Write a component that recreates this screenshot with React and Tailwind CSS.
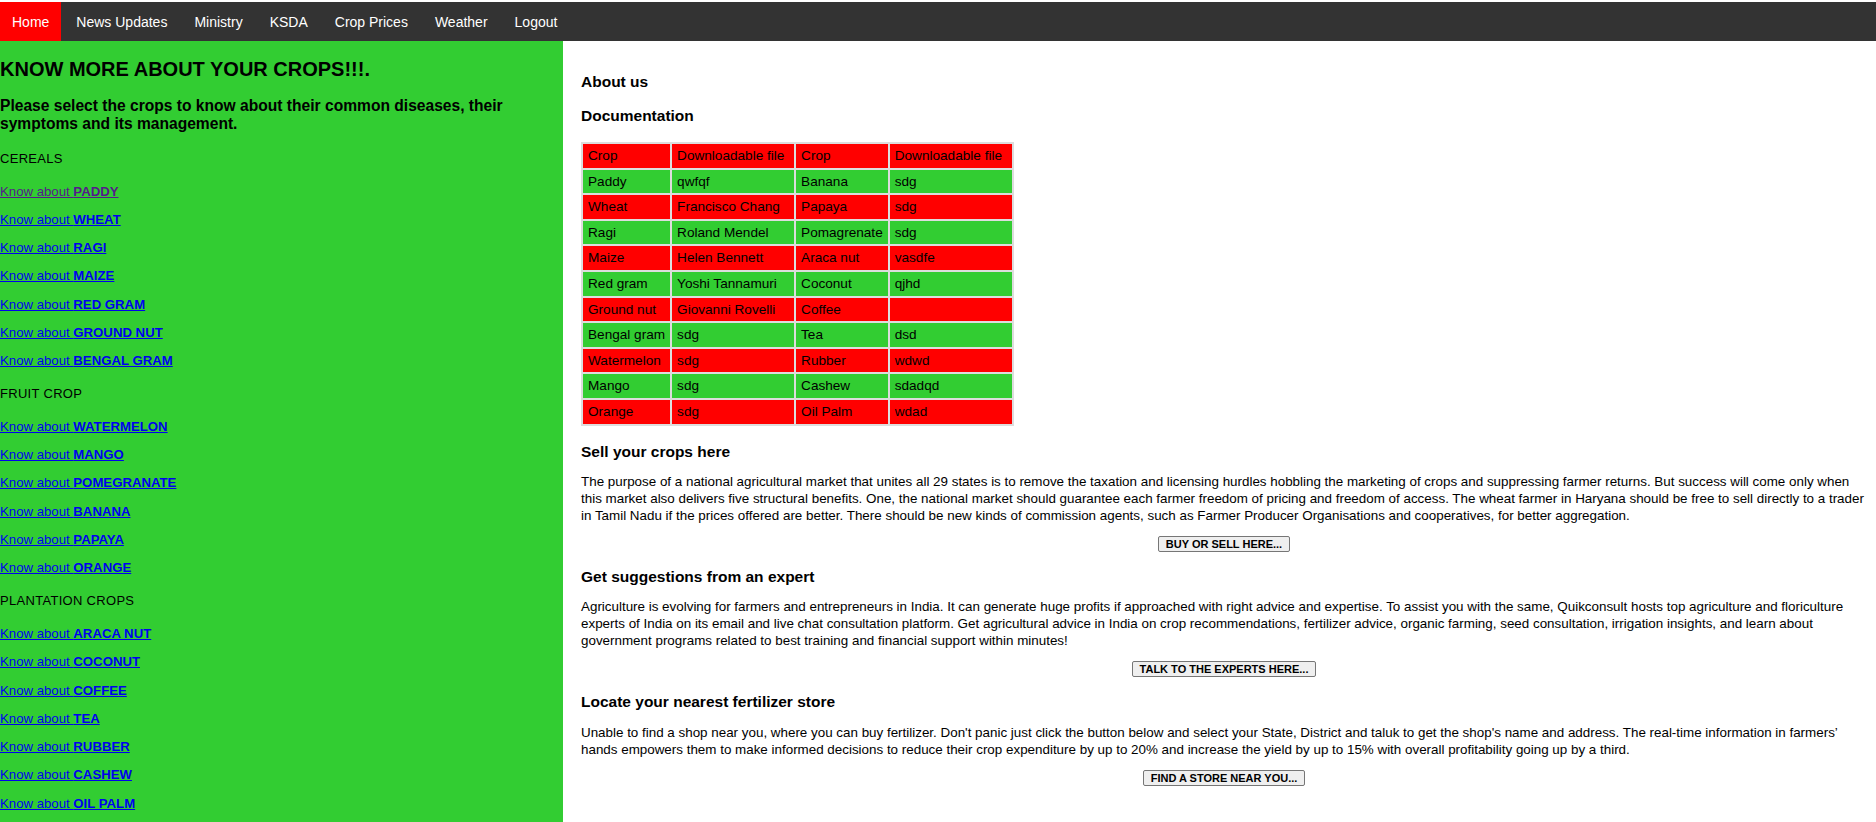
import React from 'react';

const navItems = ['Home', 'News Updates', 'Ministry', 'KSDA', 'Crop Prices', 'Weather', 'Logout'];

const cropGroups = [
  { title: 'CEREALS', crops: ['PADDY', 'WHEAT', 'RAGI', 'MAIZE', 'RED GRAM', 'GROUND NUT', 'BENGAL GRAM'] },
  { title: 'FRUIT CROP', crops: ['WATERMELON', 'MANGO', 'POMEGRANATE', 'BANANA', 'PAPAYA', 'ORANGE'] },
  { title: 'PLANTATION CROPS', crops: ['ARACA NUT', 'COCONUT', 'COFFEE', 'TEA', 'RUBBER', 'CASHEW', 'OIL PALM'] },
];

const docRows = [
  ['Paddy', 'qwfqf', 'Banana', 'sdg'],
  ['Wheat', 'Francisco Chang', 'Papaya', 'sdg'],
  ['Ragi', 'Roland Mendel', 'Pomagrenate', 'sdg'],
  ['Maize', 'Helen Bennett', 'Araca nut', 'vasdfe'],
  ['Red gram', 'Yoshi Tannamuri', 'Coconut', 'qjhd'],
  ['Ground nut', 'Giovanni Rovelli', 'Coffee', ''],
  ['Bengal gram', 'sdg', 'Tea', 'dsd'],
  ['Watermelon', 'sdg', 'Rubber', 'wdwd'],
  ['Mango', 'sdg', 'Cashew', 'sdadqd'],
  ['Orange', 'sdg', 'Oil Palm', 'wdad'],
];

// paragraphs are kept in the same lines as the original page
const sections = [
  {
    title: 'Sell your crops here',
    lines: [
      'The purpose of a national agricultural market that unites all 29 states is to remove the taxation and licensing hurdles hobbling the marketing of crops and suppressing farmer returns. But success will come only when',
      'this market also delivers five structural benefits. One, the national market should guarantee each farmer freedom of pricing and freedom of access. The wheat farmer in Haryana should be free to sell directly to a trader',
      'in Tamil Nadu if the prices offered are better. There should be new kinds of commission agents, such as Farmer Producer Organisations and cooperatives, for better aggregation.',
    ],
    button: 'BUY OR SELL HERE...',
  },
  {
    title: 'Get suggestions from an expert',
    lines: [
      'Agriculture is evolving for farmers and entrepreneurs in India. It can generate huge profits if approached with right advice and expertise. To assist you with the same, Quikconsult hosts top agriculture and floriculture',
      'experts of India on its email and live chat consultation platform. Get agricultural advice in India on crop recommendations, fertilizer advice, organic farming, seed consultation, irrigation insights, and learn about',
      'government programs related to best training and financial support within minutes!',
    ],
    button: 'TALK TO THE EXPERTS HERE...',
  },
  {
    title: 'Locate your nearest fertilizer store',
    lines: [
      "Unable to find a shop near you, where you can buy fertilizer. Don't panic just click the button below and select your State, District and taluk to get the shop's name and address. The real-time information in farmers\u2019",
      'hands empowers them to make informed decisions to reduce their crop expenditure by up to 20% and increase the yield by up to 15% with overall profitability going up by a third.',
    ],
    button: 'FIND A STORE NEAR YOU...',
  },
];

const colWidths = ['w-[83px]', 'w-[122px]', 'w-[88px]', 'w-[122px]'];

export default function App() {
  return (
    <div className="h-[822px] overflow-hidden bg-white pt-[2px] font-['Liberation_Sans',Arial,sans-serif] text-black">
      {/* top navigation */}
      <nav className="flex gap-[3px] bg-[#333333]">
        {navItems.map((item, i) => (
          <a
            key={item}
            href="#"
            className={`px-3 py-[11.5px] text-[14px] leading-4 text-white ${i === 0 ? 'bg-[#ff0000]' : ''}`}
          >
            {item}
          </a>
        ))}
      </nav>

      <div className="flex h-full">
        {/* crops sidebar */}
        <aside className="w-[563px] shrink-0 bg-[#32cd32] pt-[17px]">
          <h2 className="text-[20px] font-bold leading-[22px]">KNOW MORE ABOUT YOUR CROPS!!!.</h2>
          <h3 className="mt-[17px] text-[15.6px] font-bold leading-[18px]">
            Please select the crops to know about their common diseases, their
            <br />
            symptoms and its management.
          </h3>
          <div className="mt-[17.5px]">
            {cropGroups.map((group, gi) => (
              <div key={group.title} className={gi > 0 ? 'mt-[17.6px]' : ''}>
                <h4 className="text-[13px] leading-[15px] tracking-[0.3px]">{group.title}</h4>
                <div className="mt-[18px] flex flex-col gap-[13.3px]">
                  {group.crops.map((crop, ci) => (
                    <a
                      key={crop}
                      href="#"
                      className={`w-fit text-[13.2px] leading-[15px] underline ${
                        gi === 0 && ci === 0 ? 'text-[#551a8b]' : 'text-[#0000ee]'
                      }`}
                    >
                      Know about <b>{crop}</b>
                    </a>
                  ))}
                </div>
              </div>
            ))}
          </div>
        </aside>

        {/* main content */}
        <main className="flex-1 pl-[18px] pr-[9px] pt-[32px]">
          <h3 className="text-[15.5px] font-bold leading-[18px]">About us</h3>
          <h3 className="mt-[16px] text-[15.5px] font-bold leading-[18px]">Documentation</h3>

          <table className="mt-[17px] border-separate border-spacing-[2px] bg-[#dddddd] text-[13.6px]">
            <thead>
              <tr className="bg-[#ff0000]">
                {['Crop', 'Downloadable file', 'Crop', 'Downloadable file'].map((h, i) => (
                  <th key={i} className={`${colWidths[i]} px-[5px] py-1 text-left font-normal leading-[15.6px]`}>
                    {h}
                  </th>
                ))}
              </tr>
            </thead>
            <tbody>
              {docRows.map((row, ri) => (
                <tr key={ri} className={ri % 2 === 0 ? 'bg-[#32cd32]' : 'bg-[#ff0000]'}>
                  {row.map((cell, ci) => (
                    <td key={ci} className="whitespace-nowrap px-[5px] py-1 leading-[15.6px]">
                      {cell}
                    </td>
                  ))}
                </tr>
              ))}
            </tbody>
          </table>

          {sections.map((s, si) => (
            <section key={s.title} className={si === 0 ? 'mt-[17px]' : 'mt-[16px]'}>
              <h3 className="text-[15.5px] font-bold leading-[18px]">{s.title}</h3>
              <p className="mt-[13.5px] text-[13.4px] leading-[16.8px]">
                {s.lines.map((line, li) => (
                  <React.Fragment key={li}>
                    {li > 0 && <br />}
                    {line}
                  </React.Fragment>
                ))}
              </p>
              <div className="mt-[11.5px] flex justify-center">
                <button className="rounded-[2px] border border-[#767676] bg-[#efefef] px-[7px] text-[11px] font-bold leading-[14px]">
                  {s.button}
                </button>
              </div>
            </section>
          ))}
        </main>
      </div>
    </div>
  );
}
